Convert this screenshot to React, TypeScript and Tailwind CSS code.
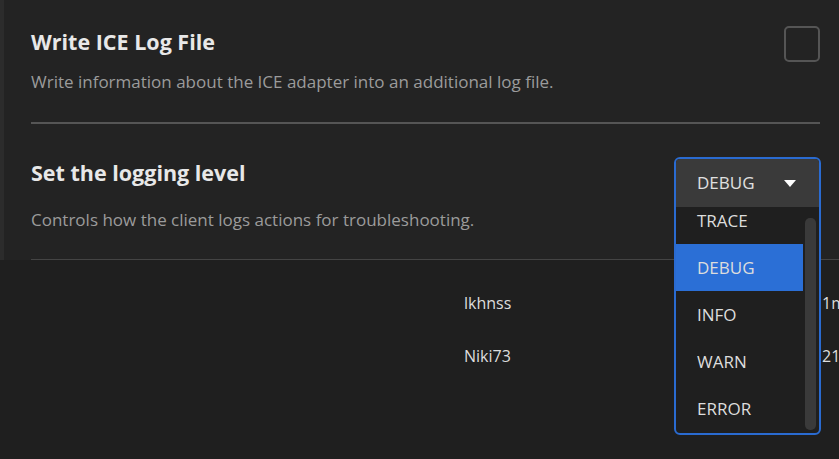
import React from "react";

const font = { fontFamily: '"Open Sans", "Noto Sans", sans-serif' };

export default function App() {
  const items = ["TRACE", "DEBUG", "INFO", "WARN", "ERROR"];
  return (
    <div className="relative w-[839px] h-[459px] overflow-hidden bg-[#1f1f1f] text-[#e6e6e6]" style={font}>
      {/* Settings panel */}
      <div className="flex h-[260px]">
        <div className="w-[4px] bg-[#2c2c2c]" />
        <div className="flex-1 bg-[#232323] pl-[27px] pr-[19px]">
          {/* Section 1 */}
          <div className="flex items-start justify-between pt-[26px]">
            <div className="pt-[2px]">
              <div className="text-[21.5px] leading-[28px] font-bold text-[#e8e8e8]">Write ICE Log File</div>
              <div className="mt-[14px] text-[17px] leading-[24px] text-[#9b9b9b]">
                Write information about the ICE adapter into an additional log file.
              </div>
            </div>
            <div className="w-[36px] h-[36px] rounded-[5px] border-2 border-[#555555]" />
          </div>
          <div className="mt-[28px] h-[2px] bg-[#555555]" />
          {/* Section 2 */}
          <div className="pt-[35px]">
            <div className="text-[21.5px] leading-[28px] font-bold text-[#e8e8e8]">Set the logging level</div>
            <div className="mt-[21px] text-[17px] leading-[24px] text-[#9b9b9b]">
              Controls how the client logs actions for troubleshooting.
            </div>
          </div>
          <div className="mt-[27px] h-[1px] bg-[#444444] -mr-[19px]" />
        </div>
      </div>

      {/* Background list rows */}
      <div className="pl-[464px] pt-[31px] text-[16px] text-[#dddddd]">
        <div className="flex h-[24px] items-center">
          <span className="w-[358px] shrink-0">lkhnss</span>
          <span>1m</span>
        </div>
        <div className="mt-[29px] flex h-[24px] items-center">
          <span className="w-[358px] shrink-0">Niki73</span>
          <span>21</span>
        </div>
      </div>

      {/* Dropdown */}
      <div className="absolute left-[674px] top-[157px] w-[147px] h-[278px] rounded-[6px] border-2 border-[#2a6bd1] bg-[#1f1f1f] overflow-hidden flex flex-col">
        <div className="h-[48px] shrink-0 bg-[#3a3a3a] flex items-center justify-between pl-[21px] pr-[23px] text-[17px] text-[#e0e0e0]">
          <span>DEBUG</span>
          <svg width="12" height="7" viewBox="0 0 12 7">
            <path d="M0 0 L12 0 L6 7 Z" fill="#ffffff" />
          </svg>
        </div>
        <div className="relative flex-1">
          <div className="-mt-[10px] w-[127px] flex flex-col">
            {items.map((it) => (
              <div
                key={it}
                className={
                  "h-[47px] shrink-0 flex items-center pl-[21px] text-[17px] text-[#dddddd] " +
                  (it === "DEBUG" ? "bg-[#2b6fd6]" : "")
                }
              >
                {it}
              </div>
            ))}
          </div>
          <div className="absolute right-[3px] top-[11px] bottom-[3px] w-[11px] rounded-[5px] bg-[#3a3a3a]" />
        </div>
      </div>
    </div>
  );
}
